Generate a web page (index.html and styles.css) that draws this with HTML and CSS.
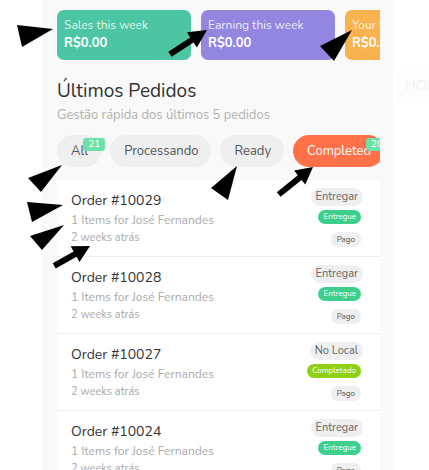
FILE: index.html
```html
<!DOCTYPE html>
<html lang="pt">
<head>
<meta charset="UTF-8" />
<meta name="viewport" content="width=device-width, initial-scale=1" />
<title>Últimos Pedidos</title>
<link rel="stylesheet" href="styles.css">
</head>
<body>
<div class="page">
  <div class="panel">
    <div class="cards">
      <div class="card green"><span class="card-label">Sales this week</span><span class="card-value">R$0.00</span></div>
      <div class="card purple"><span class="card-label">Earning this week</span><span class="card-value">R$0.00</span></div>
      <div class="card orange"><span class="card-label">Your balance</span><span class="card-value">R$0.00</span></div>
    </div>

    <h2 class="title">Últimos Pedidos</h2>
    <p class="subtitle">Gestão rápida dos últimos 5 pedidos</p>

    <div class="tabs">
      <div class="tab">All<span class="count">21</span></div>
      <div class="tab">Processando</div>
      <div class="tab">Ready</div>
      <div class="tab active">Completed<span class="count">20</span></div>
    </div>

    <div class="orders">
      <div class="order">
        <div class="info">
          <div class="order-id">Order #10029</div>
          <div class="order-items">1 Items for José Fernandes</div>
          <div class="order-date">2 weeks atrás</div>
        </div>
        <div class="tags">
          <span class="tag type">Entregar</span>
          <span class="tag small done">Entregue</span>
          <span class="tag small paid">Pago</span>
        </div>
      </div>
      <div class="order">
        <div class="info">
          <div class="order-id">Order #10028</div>
          <div class="order-items">1 Items for José Fernandes</div>
          <div class="order-date">2 weeks atrás</div>
        </div>
        <div class="tags">
          <span class="tag type">Entregar</span>
          <span class="tag small done">Entregue</span>
          <span class="tag small paid">Pago</span>
        </div>
      </div>
      <div class="order">
        <div class="info">
          <div class="order-id">Order #10027</div>
          <div class="order-items">1 Items for José Fernandes</div>
          <div class="order-date">2 weeks atrás</div>
        </div>
        <div class="tags">
          <span class="tag type">No Local</span>
          <span class="tag small complete">Completado</span>
          <span class="tag small paid">Pago</span>
        </div>
      </div>
      <div class="order">
        <div class="info">
          <div class="order-id">Order #10024</div>
          <div class="order-items">1 Items for José Fernandes</div>
          <div class="order-date">2 weeks atrás</div>
        </div>
        <div class="tags">
          <span class="tag type">Entregar</span>
          <span class="tag small done">Entregue</span>
          <span class="tag small paid">Pago</span>
        </div>
      </div>
    </div>
  </div>

  <div class="side">
    <div class="today">HOJE</div>
  </div>
</div>

<!-- mouse pointers over the screen -->
<svg class="pointers" width="429" height="470" viewBox="0 0 429 470">
  <polygon points="53,29 17,25 22,47" />
  <polygon points="207,30 187,32.3 190.2,37.4 168.3,51.7 171.6,56.7 193.5,42.4 196.9,47.5" />
  <polygon points="352,30 320,46 334,61" />
  <polygon points="62,165 28,178 41,192" />
  <polygon points="63,205 27,202 32,222" />
  <polygon points="64,225 30,236 42,250" />
  <polygon points="90,246 70.7,246.3 73.6,251.6 52.7,263.3 55.7,268.5 76.6,256.8 79.5,262.1" />
  <polygon points="237,166 211,188 228,200" />
  <polygon points="313,167 294.1,170.6 297.8,175.3 276.8,192.2 280.6,196.8 301.6,179.9 305.3,184.6" />
</svg>
</body>
</html>
```

FILE: styles.css
```css
body { margin: 0; background: #fff; font-family: "Nunito", Lato, "Open Sans", sans-serif; overflow: hidden; }
.page { display: flex; padding-left: 42px; height: 470px; }
.panel { width: 323px; flex-shrink: 0; background: #f9f9f9; padding: 10px 13px 0 15px; overflow: hidden; }

.cards { display: flex; gap: 10px; overflow: hidden; }
.card { flex: 0 0 134px; height: 50px; box-sizing: border-box; border-radius: 7px; padding: 8px 7px; color: #fff; display: flex; flex-direction: column; }
.card.green { background: #4cc6a2; }
.card.purple { background: #9386e0; }
.card.orange { background: #f8b24e; }
.card-label { font-size: 12px; line-height: 15px; color: rgba(255,255,255,0.85); white-space: nowrap; }
.card-value { font-size: 13px; line-height: 18px; font-weight: bold; margin-top: 1px; }

.title { font-size: 19px; line-height: 24px; font-weight: normal; color: #333; margin: 19px 0 0; }
.subtitle { font-size: 13px; line-height: 16px; color: #b2b2b2; margin: 4px 0 0; }

.tabs { display: flex; gap: 9px; margin-top: 12px; overflow: hidden; }
.tab { position: relative; flex-shrink: 0; height: 32px; line-height: 32px; padding: 0 13px 0 14px; border-radius: 16px; background: #efefef; color: #555; font-size: 13px; }
.tab.active { background: #ff7249; color: #fff; }
.count { position: absolute; top: 3px; right: -4px; background: #6fe0aa; color: #fff; font-size: 10px; line-height: 13px; padding: 0 5px; border-radius: 3px; }

.orders { margin-top: 13px; background: #fff; }
.order { display: flex; justify-content: space-between; align-items: flex-start; padding: 8px 17px 9px 14px; border-bottom: 1px solid #eeeeee; }
.info { padding-top: 4px; }
.order-id { font-size: 14px; line-height: 18px; color: #333; }
.order-items { font-size: 12px; line-height: 16px; color: #a9a9a9; margin-top: 2px; }
.order-date { font-size: 11px; line-height: 15px; color: #aaa; margin-top: 2px; }

.tags { display: flex; flex-direction: column; align-items: flex-end; }
.tag { border-radius: 9px; white-space: nowrap; }
.tag.type { font-size: 11px; line-height: 18px; padding: 0 5px; background: #efefef; color: #666; }
.tag.small { font-size: 8px; line-height: 14px; padding: 0 5px; margin-right: 2px; border-radius: 7px; }
.tag.done { background: #3ecf8e; color: #fff; margin-top: 4px; }
.tag.complete { background: #8fcf16; color: #fff; margin-top: 4px; }
.tag.paid { background: #efefef; color: #555; margin-top: 8px; line-height: 15px; padding: 0 6px; }

.side { flex: 1; }
.today { margin: 70px 0 0 2px; height: 32px; line-height: 32px; padding-left: 10px; background: #fdfdfd; color: #f3f3f3; font-size: 14px; }

.pointers { position: absolute; top: 0; left: 0; pointer-events: none; }
.pointers polygon { fill: #000; }
```
